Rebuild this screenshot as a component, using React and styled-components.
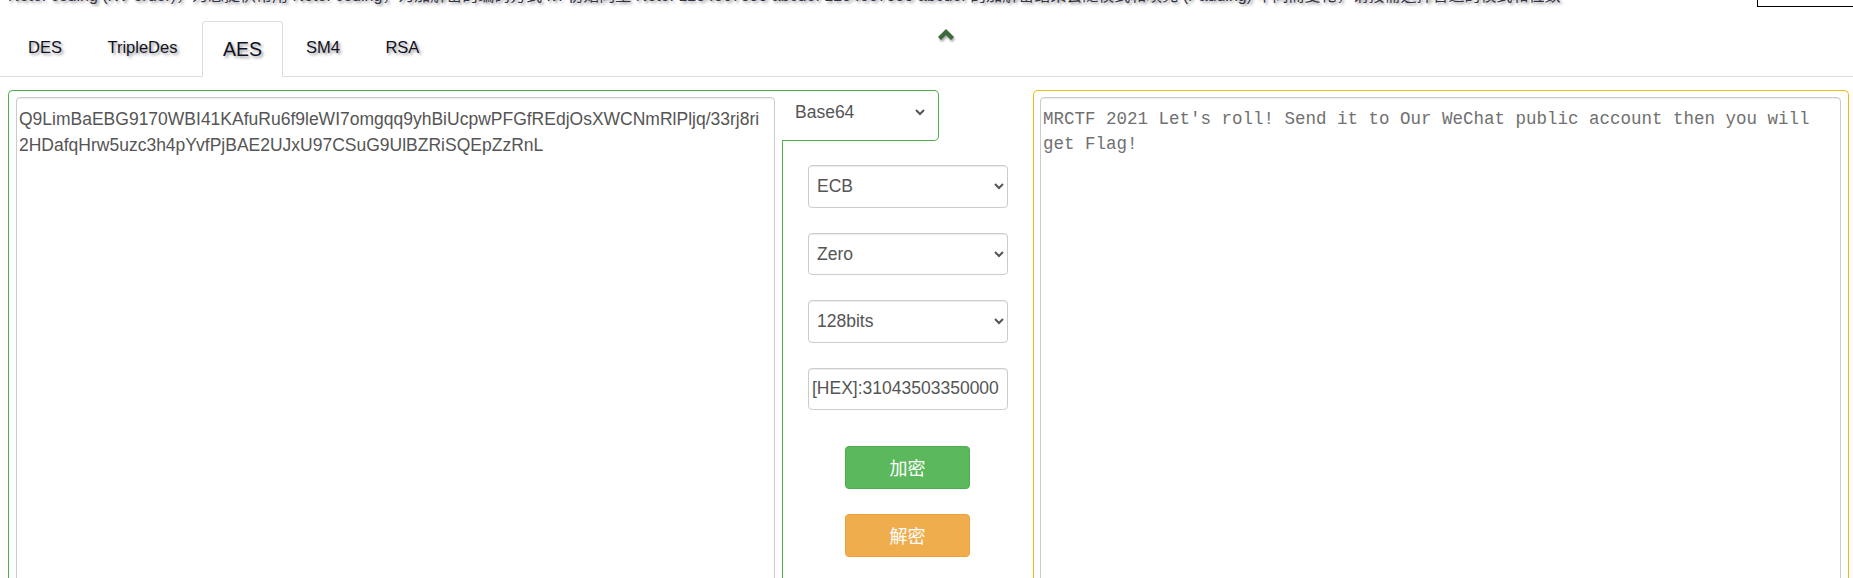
import React from "react";
import styled, { createGlobalStyle } from "styled-components";

const Global = createGlobalStyle`
  html, body { margin: 0; padding: 0; height: 578px; overflow: hidden; background: #fff; }
  body { font-family: "Liberation Sans", Arial, "Noto Sans CJK SC", sans-serif; font-size: 16px; color: #555; }
  * { box-sizing: border-box; }
`;

const Page = styled.div`
  display: flex;
  flex-direction: column;
  height: 578px;
  overflow: hidden;
  position: relative;
`;

const Notice = styled.div`
  height: 7px;
  overflow: hidden;
  flex: none;
  padding-left: 8px;
`;

const NoticeText = styled.p`
  margin: -15px 0 0;
  font-size: 16px;
  line-height: 22px;
  white-space: nowrap;
  color: #334;
  text-shadow: 2px 2px 3px #999;
`;

const CornerBox = styled.div`
  position: absolute;
  top: -10px;
  left: 1757px;
  right: -4px;
  height: 17px;
  border: 1px solid #000;
  background: #fff;
`;

const TabBar = styled.nav`
  display: flex;
  align-items: flex-end;
  height: 70px;
  flex: none;
  padding-left: 7px;
  border-bottom: 1px solid #ddd;
  position: relative;
`;

const Tab = styled.a`
  display: flex;
  align-items: center;
  justify-content: center;
  height: ${(p) => (p.$active ? "56px" : "48px")};
  padding: ${(p) => (p.$active ? "1px 20px 0" : "0 20px 12px")};
  margin-right: ${(p) => (p.$active ? "2px" : "3.5px")};
  margin-bottom: -1px;
  font-size: ${(p) => (p.$active ? "19.5px" : "16.5px")};
  color: #112;
  text-shadow: 2px 2px 3px #999;
  background: ${(p) => (p.$active ? "#fff" : "transparent")};
  border: 1px solid ${(p) => (p.$active ? "#ddd" : "transparent")};
  border-bottom-color: ${(p) => (p.$active ? "#fff" : "transparent")};
  border-radius: 4px 4px 0 0;
`;

const Collapse = styled.svg`
  position: absolute;
  left: 936px;
  top: 20px;
  width: 20px;
  height: 16px;
  filter: drop-shadow(1px 2px 1px rgba(0, 0, 0, 0.35));
`;

const Workspace = styled.main`
  display: flex;
  flex: 1;
  min-height: 0;
  margin-top: 13px;
  padding-left: 8px;
  padding-right: 4px;
`;

const InputCell = styled.section`
  width: 774px;
  flex: none;
  padding: 6px 7px 0;
  border-left: 1px solid #4cae4c;
  border-top: 1px solid #4cae4c;
  border-top-left-radius: 5px;
  display: flex;
`;

const TextBox = styled.textarea`
  display: block;
  width: 100%;
  height: 560px;
  padding: ${(p) => (p.$mono ? "9px 2px" : "8px 10px 8px 2px")};
  border: 1px solid #ccc;
  border-radius: 4px;
  box-shadow: inset 0 1px 1px rgba(0, 0, 0, 0.075);
  background: #fff;
  color: ${(p) => (p.$mono ? "#707070" : "#555")};
  font-family: ${(p) => (p.$mono ? '"Liberation Mono", "Courier New", monospace' : '"Liberation Sans", Arial, sans-serif')};
  font-size: 17.5px;
  line-height: ${(p) => (p.$mono ? "25px" : "26px")};
  resize: none;
  outline: none;
  overflow: hidden;
`;

const SideColumn = styled.aside`
  width: 251px;
  flex: none;
  display: flex;
  flex-direction: column;
`;

const FormatTab = styled.div`
  width: 157px;
  height: 51px;
  flex: none;
  border: 1px solid #4cae4c;
  border-left: none;
  border-radius: 0 5px 5px 0;
  display: flex;
  align-items: flex-start;
  background: #fff;
  position: relative;
`;

const FormatSelect = styled.select`
  width: 141px;
  height: 38px;
  margin-top: 2px;
  margin-left: 5px;
  padding: 0 4px;
  border: none;
  background: #fff;
  color: #555;
  font-family: inherit;
  font-size: 17.5px;
  outline: none;
`;

const Controls = styled.div`
  flex: 1;
  border-left: 1px solid #4cae4c;
  margin-top: -1px;
  padding: 25px 25px 0;
  display: flex;
  flex-direction: column;
  align-items: stretch;
  gap: 25px;
`;

const Field = styled.select`
  width: 200px;
  height: 42.5px;
  padding: 0 4px;
  border: 1px solid #ccc;
  border-radius: 4px;
  background: #fff;
  color: #555;
  font-family: inherit;
  font-size: 17.5px;
  box-shadow: inset 0 1px 1px rgba(0, 0, 0, 0.075);
  outline: none;
`;

const KeyInput = styled.input`
  width: 200px;
  height: 42.5px;
  padding: 0 3px;
  border: 1px solid #ccc;
  border-radius: 4px;
  color: #555;
  font-family: inherit;
  font-size: 17.5px;
  box-shadow: inset 0 1px 1px rgba(0, 0, 0, 0.075);
  outline: none;
`;

const Action = styled.button`
  width: 125px;
  height: 43px;
  align-self: center;
  margin-top: ${(p) => p.$spaced || 0}px;
  margin-left: -1px;
  padding: 0 0 2px;
  border: 1px solid ${(p) => (p.$tone === "warn" ? "#eea236" : "#4cae4c")};
  border-radius: 4px;
  background: ${(p) => (p.$tone === "warn" ? "#f0ad4e" : "#5cb85c")};
  color: #fff;
  font-family: "Noto Sans CJK SC", sans-serif;
  font-size: 18px;
`;

const OutputCell = styled.section`
  flex: 1;
  min-width: 0;
  padding: 6px 7px 0 6px;
  border: 1px solid #eebb11;
  border-bottom: none;
  border-radius: 5px 5px 0 0;
  display: flex;
`;

const ignore = () => {};

export default function App() {
  return (
    <Page>
      <Global />
      <Notice>
        <NoticeText>
          Note: coding (KV order)，为您提供常用 Note: coding，为加解密的编码方式 iv: 初始向量 Note: 1234567890 abcdef 1234567890 abcdef 的加解密结果会随模式和填充 (Padding) 不同而变化，请按需选择合适的模式和位数
        </NoticeText>
      </Notice>
      <CornerBox />
      <TabBar>
        <Tab>DES</Tab>
        <Tab>TripleDes</Tab>
        <Tab $active>AES</Tab>
        <Tab>SM4</Tab>
        <Tab>RSA</Tab>
        <Collapse viewBox="0 0 20 16" aria-hidden="true">
          <path d="M10 2 L18 10 L15 13 L10 8 L5 13 L2 10 Z" fill="#3b6b3b" />
        </Collapse>
      </TabBar>
      <Workspace>
        <InputCell>
          <TextBox
            readOnly
            value="Q9LimBaEBG9170WBI41KAfuRu6f9leWI7omgqq9yhBiUcpwPFGfREdjOsXWCNmRlPljq/33rj8ri2HDafqHrw5uzc3h4pYvfPjBAE2UJxU97CSuG9UlBZRiSQEpZzRnL"
          />
        </InputCell>
        <SideColumn>
          <FormatTab>
            <FormatSelect value="Base64" onChange={ignore}>
              <option>Base64</option>
              <option>Hex</option>
            </FormatSelect>
          </FormatTab>
          <Controls>
            <Field value="ECB" onChange={ignore}>
              <option>ECB</option>
              <option>CBC</option>
            </Field>
            <Field value="Zero" onChange={ignore}>
              <option>Zero</option>
              <option>Pkcs7</option>
            </Field>
            <Field value="128bits" onChange={ignore}>
              <option>128bits</option>
              <option>256bits</option>
            </Field>
            <KeyInput readOnly value="[HEX]:31043503350000" />
            <Action $spaced={11}>加密</Action>
            <Action $tone="warn">解密</Action>
          </Controls>
        </SideColumn>
        <OutputCell>
          <TextBox
            $mono
            readOnly
            value="MRCTF 2021 Let's roll! Send it to Our WeChat public account then you will get Flag!"
          />
        </OutputCell>
      </Workspace>
    </Page>
  );
}
